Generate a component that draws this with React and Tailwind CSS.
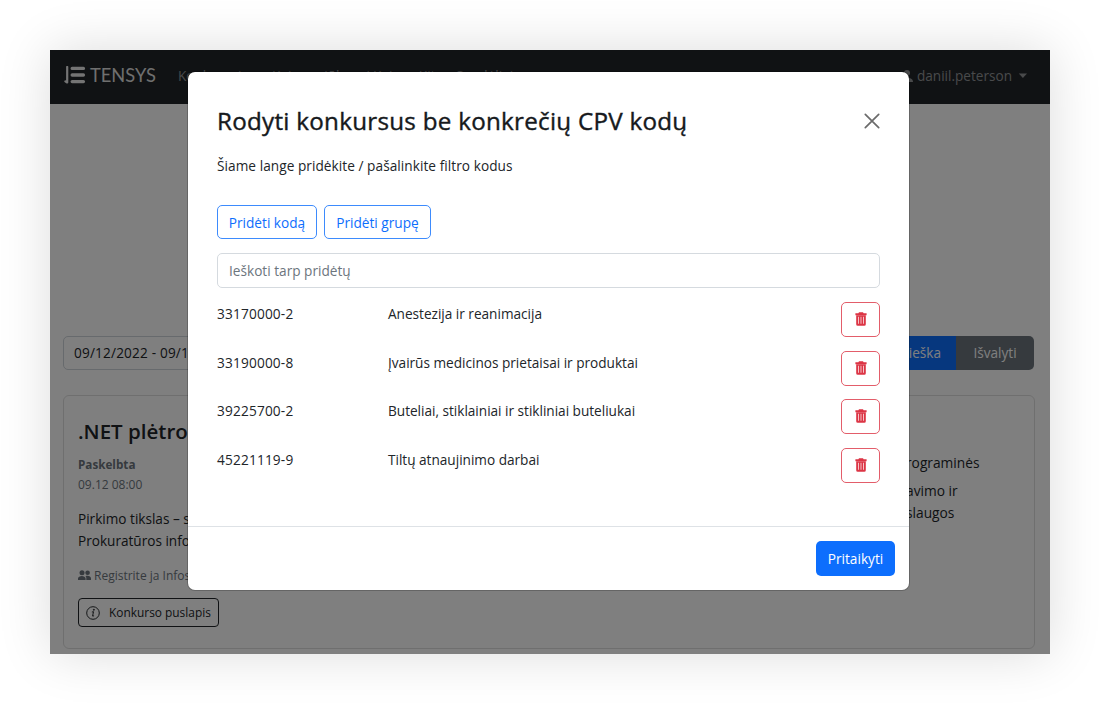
import React from "react";

const ROWS = [
  ["33170000-2", "Anestezija ir reanimacija"],
  ["33190000-8", "Įvairūs medicinos prietaisai ir produktai"],
  ["39225700-2", "Buteliai, stiklainiai ir stikliniai buteliukai"],
  ["45221119-9", "Tiltų atnaujinimo darbai"],
];

function Trash() {
  return (
    <svg width="12" height="14" viewBox="0 0 12 14" fill="#dc3545" className="-mt-px">
      <path d="M4 0.300h4l.6 1H11.600v2H.4v-2H3.400z" />
      <path fillRule="evenodd" d="M1.200 3.300h9.600v8.900a1.500 1.500 0 0 1-1.500 1.500H2.700a1.500 1.500 0 0 1-1.500-1.500zM3.200 4.800v7h.7v-7zM5.650 4.800v7h.7v-7zM8.100 4.800v7h.7v-7z" />
    </svg>
  );
}

function Navbar() {
  return (
    <header className="flex h-[54px] shrink-0 items-center bg-[#212529] pb-[2px] pl-[14px] pr-[22px] text-[13.6px] text-[#929497]">
      <svg width="22" height="18" viewBox="0 0 22 18" className="mr-[4px] mt-[-2px] shrink-0">
        <path d="M3.200 1v15.500L1.400 15.300" stroke="#e8e8e8" strokeWidth="2.200" fill="none" strokeLinecap="round" strokeLinejoin="round" />
        <path d="M8.200 2.400h11.200M8.200 9h11.200M8.200 15.600h11.200" stroke="#e8e8e8" strokeWidth="3.400" strokeLinecap="round" />
      </svg>
      <span className="mt-[-2px] w-[88px] whitespace-nowrap font-[Lato] text-[18.300px] leading-6 text-[#dedede]">TENSYS</span>
      <nav className="flex whitespace-nowrap">
        <span className="w-[94px]">Konkursai</span>
        <span className="w-[101px]">Kainos siūlymai</span>
        <span className="w-[83px]">Kainos Kita</span>
        <span>Sandėliai</span>
      </nav>
      <div className="ml-auto flex items-center">
        <svg width="12" height="14" viewBox="0 0 12 14" fill="#929497" className="mr-1">
          <circle cx="6" cy="4" r="3" />
          <path d="M0 13c0-6 12-6 12 0z" />
        </svg>
        <span>daniil.peterson</span>
        <svg width="10" height="6" viewBox="0 0 10 6" className="ml-[6px]" fill="#929497"><path d="M.8 .6h8.200L4.900 5z" /></svg>
      </div>
    </header>
  );
}

function TenderCard() {
  return (
    <section className="mt-[25px] flex h-[254px] justify-between rounded-[6px] border border-[#dfdfdf] px-[14px] pt-[21px] text-[#212529]">
      <div className="w-[400px]">
        <h2 className="whitespace-nowrap text-[20.500px] font-semibold leading-7">.NET plėtros</h2>
        <div className="mt-[9px] text-[11.700px] font-bold leading-5 text-[#6c757d]">Paskelbta</div>
        <div className="mt-px text-[12px] leading-[19px] text-[#6c757d]">09.12 08:00</div>
        <p className="mt-[14px] whitespace-nowrap text-[13.600px] leading-[22px]">Pirkimo tikslas – sukurti<br />Prokuratūros informacinę</p>
        <div className="mt-[13px] flex items-center gap-[3px] whitespace-nowrap text-[12px] leading-5 text-[#6c757d]">
          <svg width="13" height="11" viewBox="0 0 13 11" fill="#6c757d"><circle cx="4" cy="2.800" r="2.500" /><circle cx="9.600" cy="2.800" r="2.300" /><path d="M0 10V8.500C0 5 7.600 5 7.600 8.500V10zM8.300 10V8c0-.7-.3-1.300-.8-1.800C9.300 5.300 13 5.600 13 8.500V10z" /></svg>
          <span className="pt-px">Registrite ja Infosüsteemide</span>
        </div>
        <button className="mt-[12px] flex h-[29px] w-[140.500px] items-center gap-[9px] rounded-[4px] border border-[#212529] px-[7px] text-[11.900px]">
          <svg width="14" height="14" viewBox="0 0 16 16" fill="none" stroke="#212529" strokeWidth="1.100" className="shrink-0"><circle cx="8" cy="8" r="7.200" /><path d="M6.700 6.900l1.900-.4L7.500 11.500l1.700-.3" /><circle cx="9" cy="4.300" r=".6" fill="#212529" /></svg>
          <span className="whitespace-nowrap">Konkurso puslapis</span>
        </button>
      </div>
      <div className="mr-[23px] mt-[35px] w-[96px] whitespace-nowrap pl-[5px] text-[13.750px] leading-[22px]">
        <div>rograminės</div>
        <div className="mt-[6px]">avimo ir<br />slaugos</div>
      </div>
    </section>
  );
}

function Dialog() {
  return (
    <div className="absolute left-[138px] top-[22px] flex h-[518px] w-[721px] flex-col rounded-[7px] bg-white text-[13.650px] text-[#212529] shadow-[0_0_0_1px_rgba(0,0,0,0.2)]">
      <div className="flex h-[455px] flex-col border-b border-[#dee2e6] pl-[29px] pr-[29px] pt-[32px]">
        <div className="flex h-[34px] items-center justify-between">
          <h1 className="whitespace-nowrap text-[24.200px] font-medium leading-[34px] tracking-[0.270px] text-[#16191c] [-webkit-text-stroke:0.400px_#16191c]">Rodyti konkursus be konkrečių CPV kodų</h1>
          <svg width="16" height="16" viewBox="0 0 16 16" stroke="#6b6b6b" strokeWidth="1.700" strokeLinecap="round"><path d="M1.300 1.300l13.400 13.400M14.700 1.300L1.300 14.700" /></svg>
        </div>
        <p className="mt-[17px] leading-[22px] tracking-[0.050px]">Šiame lange pridėkite / pašalinkite filtro kodus</p>
        <div className="mt-[28px] flex gap-[7px] text-[#0d6efd]">
          <button className="h-[34px] w-[100px] whitespace-nowrap rounded-[5px] border border-[#3d8bfd] pt-[2px]">Pridėti kodą</button>
          <button className="h-[34px] w-[107px] whitespace-nowrap rounded-[5px] border border-[#3d8bfd] pt-[2px]">Pridėti grupę</button>
        </div>
        <div className="mt-[14px] flex h-[35px] items-center rounded-[5px] border border-[#d5dadf] px-[11px] pt-px text-[#6c757d]">Ieškoti tarp pridėtų</div>
        <ul className="mt-[14px] flex flex-col gap-[13.700px]">
          {ROWS.map(([code, name]) => (
            <li key={code} className="flex h-[35px]">
              <span className="w-[171px] leading-[23px] tracking-[0.180px]">{code}</span>
              <span className="grow leading-[23px] tracking-[-0.020px]">{name}</span>
              <button className="flex h-[35px] w-[39px] items-center justify-center rounded-[5px] border border-[#e35d6a]"><Trash /></button>
            </li>
          ))}
        </ul>
      </div>
      <div className="flex h-[63px] justify-end pr-[14px] pt-[14px]">
        <button className="h-[35px] w-[79px] rounded-[5px] bg-[#0d6efd] pt-[2px] text-white">Pritaikyti</button>
      </div>
    </div>
  );
}

export default function App() {
  return (
    <div className="h-[704px] w-[1100px] overflow-hidden bg-white p-[50px] font-['Open_Sans',sans-serif]">
      <div className="relative flex h-[604px] w-[1000px] flex-col overflow-hidden bg-white shadow-[0_0_50px_rgba(0,0,0,0.14)]">
        <Navbar />
        <main className="pl-[13px] pr-[15px] pt-[232px]">
          <div className="flex h-[34px] justify-between pr-px text-[13.600px] text-[#212529]">
            <div className="flex w-[300px] items-center rounded-[5px] border border-[#ced4da] px-[10px] pt-px tracking-[0.180px]">09/12/2022 - 09/19</div>
            <div className="flex text-white">
              <button className="w-[82px] rounded-l-[5px] bg-[#0d6efd] pl-[4px] pt-px">Paieška</button>
              <button className="w-[78px] rounded-r-[5px] bg-[#6c757d] pt-px">Išvalyti</button>
            </div>
          </div>
          <TenderCard />
        </main>
        <div className="absolute inset-0 bg-black/50" />
        <Dialog />
      </div>
    </div>
  );
}
